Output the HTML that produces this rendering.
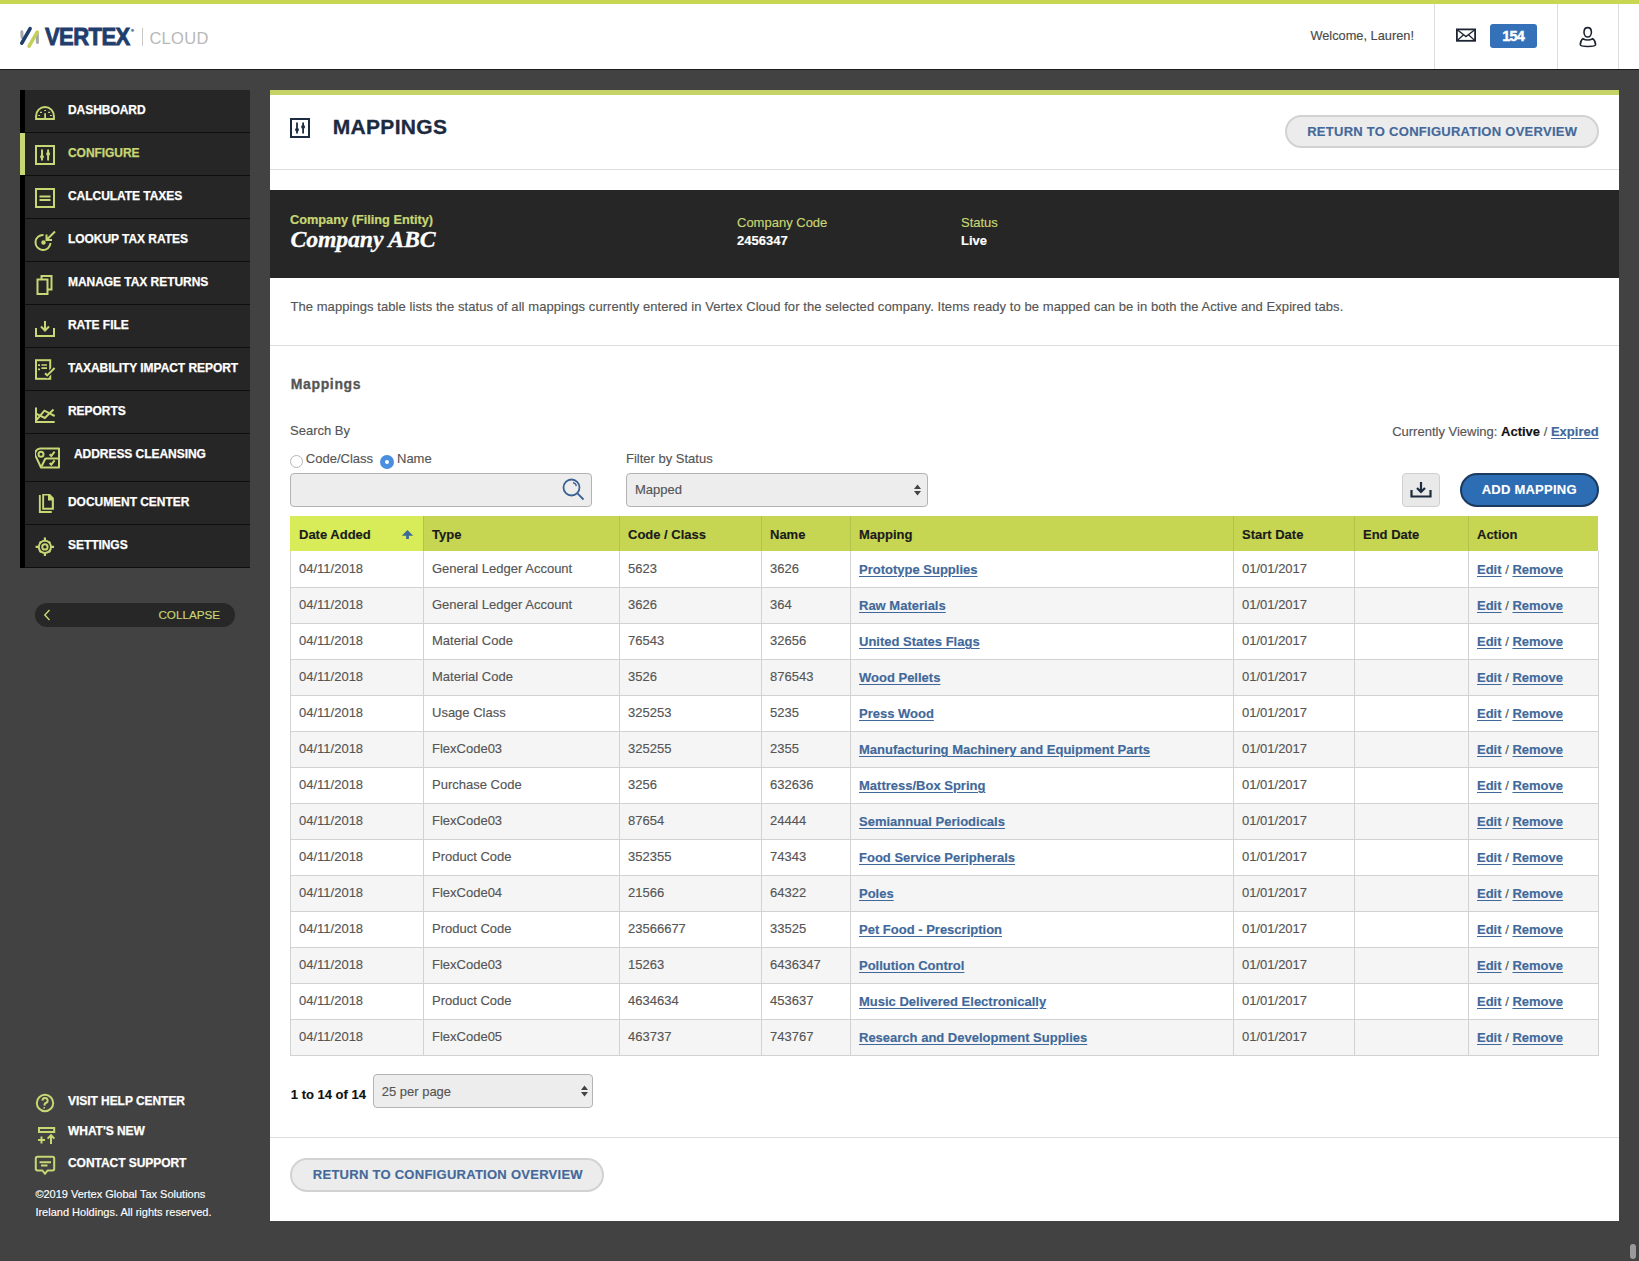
<!DOCTYPE html>
<html><head><meta charset="utf-8"><title>Vertex Cloud - Mappings</title>
<style>
*{box-sizing:border-box;margin:0;padding:0}
html,body{width:1639px;height:1261px;overflow:hidden;background:#424242;font-family:"Liberation Sans",sans-serif;position:relative}
.t{position:absolute;white-space:nowrap;-webkit-text-stroke:0.15px currentColor}
.r{position:absolute}
.b{font-weight:bold}
.nav{color:#fff;font-weight:bold;-webkit-text-stroke:0.25px currentColor;letter-spacing:-0.05px}
.lnk{color:#41689a;font-weight:bold;text-decoration:underline;text-underline-offset:2px}
.cell{color:#555}
.hd{color:#1b1b1b;font-weight:bold}
.serif{font-family:"Liberation Serif",serif;font-weight:bold;font-style:italic}
</style></head><body>

<div class="r" style="left:0px;top:0px;width:1639px;height:4px;background:#c8d752"></div>
<div class="r" style="left:0px;top:4px;width:1639px;height:65px;background:#fff"></div>
<div class="r" style="left:0px;top:69px;width:1639px;height:1px;background:#1c1c1c"></div>
<div class="r" style="left:1434px;top:4px;width:1px;height:65px;background:#dcdcdc"></div>
<div class="r" style="left:1557px;top:4px;width:1px;height:65px;background:#dcdcdc"></div>
<div class="r" style="left:1618px;top:4px;width:1px;height:65px;background:#dcdcdc"></div>
<svg class="r" style="left:18px;top:26px;" width="24" height="23" viewBox="0 0 24 23" fill="none"><line x1="3.8" y1="5.8" x2="4.1" y2="11.5" stroke="#a3a7ab" stroke-width="3" stroke-linecap="round"/><line x1="12.1" y1="2.6" x2="3.8" y2="17.2" stroke="#1f3d6d" stroke-width="3.6" stroke-linecap="round"/><line x1="19.3" y1="6.5" x2="19.4" y2="16.5" stroke="#a3a7ab" stroke-width="3" stroke-linecap="round"/><line x1="19.2" y1="6.2" x2="11.1" y2="20.2" stroke="#c3d15a" stroke-width="3.6" stroke-linecap="round"/></svg>
<div class="t b" style="left:45.00px;top:26.98px;font-size:22px;line-height:22px;color:#1f3d6d;letter-spacing:-0.55px;-webkit-text-stroke:0.8px #1f3d6d;transform:scaleY(1.1);transform-origin:0 17.6px">VERTEX</div>
<div class="t " style="left:131.00px;top:29.11px;font-size:4px;line-height:4px;color:#1f3d6d">®</div>
<div class="r" style="left:142px;top:28px;width:1px;height:18px;background:#c8c8c8"></div>
<div class="t " style="left:149.40px;top:29.83px;font-size:16.5px;line-height:16.5px;color:#b8b8b8;letter-spacing:0.3px;-webkit-text-stroke:0px">CLOUD</div>
<div class="t " style="right:225.00px;top:29.96px;font-size:12.8px;line-height:12.8px;color:#4a4a4a">Welcome, Lauren!</div>
<svg class="r" style="left:1456px;top:28px;" width="21" height="15" viewBox="0 0 21 15" fill="none"><rect x="0.9" y="1.4" width="18.2" height="11.4" stroke="#1d2533" stroke-width="1.8"/><path d="M1.2 1.8 L10 8.6 L18.8 1.8 M1.2 12.4 L7.6 6.8 M18.8 12.4 L12.4 6.8" stroke="#1d2533" stroke-width="1.3"/></svg>
<div class="r" style="left:1490px;top:24px;width:47px;height:24px;background:#3571b8;border-radius:3px"></div>
<div class="t b" style="left:1502.30px;top:29.33px;font-size:14.5px;line-height:14.5px;color:#fff;letter-spacing:-0.9px;-webkit-text-stroke:0.4px #fff">154</div>
<svg class="r" style="left:1578px;top:26px;" width="20" height="23" viewBox="0 0 20 23" fill="none"><path d="M9.7 1.6 C12 1.6 13.4 3.6 13.4 6.2 C13.4 9 11.6 11 9.7 11 C7.8 11 6 9 6 6.2 C6 3.6 7.4 1.6 9.7 1.6 Z" stroke="#1d2533" stroke-width="1.6"/><path d="M4.9 12.6 Q7 14 9.8 14 Q12.6 14 14.7 12.6 Q17.4 14.4 17.6 18.8 Q17.6 20.4 9.9 20.5 Q2.3 20.4 2.3 18.8 Q2.4 14.4 4.9 12.6 Z" stroke="#1d2533" stroke-width="1.6" stroke-linejoin="round"/></svg>
<div class="r" style="left:20px;top:90px;width:5px;height:478px;background:#000"></div>
<div class="r" style="left:25px;top:90px;width:225px;height:42px;background:#262626"></div>
<div class="r" style="left:25px;top:132px;width:225px;height:1px;background:#0e0e0e"></div>
<div class="t nav" style="left:68.00px;top:103.64px;font-size:12px;line-height:12px;color:#fff">DASHBOARD</div>
<div class="r" style="left:25px;top:133px;width:225px;height:42px;background:#262626"></div>
<div class="r" style="left:25px;top:175px;width:225px;height:1px;background:#0e0e0e"></div>
<div class="t nav" style="left:68.00px;top:146.64px;font-size:12px;line-height:12px;color:#c8d674">CONFIGURE</div>
<div class="r" style="left:25px;top:176px;width:225px;height:42px;background:#262626"></div>
<div class="r" style="left:25px;top:218px;width:225px;height:1px;background:#0e0e0e"></div>
<div class="t nav" style="left:68.00px;top:189.64px;font-size:12px;line-height:12px;color:#fff">CALCULATE TAXES</div>
<div class="r" style="left:25px;top:219px;width:225px;height:42px;background:#262626"></div>
<div class="r" style="left:25px;top:261px;width:225px;height:1px;background:#0e0e0e"></div>
<div class="t nav" style="left:68.00px;top:232.64px;font-size:12px;line-height:12px;color:#fff">LOOKUP TAX RATES</div>
<div class="r" style="left:25px;top:262px;width:225px;height:42px;background:#262626"></div>
<div class="r" style="left:25px;top:304px;width:225px;height:1px;background:#0e0e0e"></div>
<div class="t nav" style="left:68.00px;top:275.64px;font-size:12px;line-height:12px;color:#fff">MANAGE TAX RETURNS</div>
<div class="r" style="left:25px;top:305px;width:225px;height:42px;background:#262626"></div>
<div class="r" style="left:25px;top:347px;width:225px;height:1px;background:#0e0e0e"></div>
<div class="t nav" style="left:68.00px;top:318.64px;font-size:12px;line-height:12px;color:#fff">RATE FILE</div>
<div class="r" style="left:25px;top:348px;width:225px;height:42px;background:#262626"></div>
<div class="r" style="left:25px;top:390px;width:225px;height:1px;background:#0e0e0e"></div>
<div class="t nav" style="left:68.00px;top:361.64px;font-size:12px;line-height:12px;color:#fff">TAXABILITY IMPACT REPORT</div>
<div class="r" style="left:25px;top:391px;width:225px;height:42px;background:#262626"></div>
<div class="r" style="left:25px;top:433px;width:225px;height:1px;background:#0e0e0e"></div>
<div class="t nav" style="left:68.00px;top:404.64px;font-size:12px;line-height:12px;color:#fff">REPORTS</div>
<div class="r" style="left:25px;top:434px;width:225px;height:47px;background:#262626"></div>
<div class="r" style="left:25px;top:481px;width:225px;height:1px;background:#0e0e0e"></div>
<div class="t nav" style="left:74.00px;top:447.64px;font-size:12px;line-height:12px;color:#fff">ADDRESS CLEANSING</div>
<div class="r" style="left:25px;top:482px;width:225px;height:42px;background:#262626"></div>
<div class="r" style="left:25px;top:524px;width:225px;height:1px;background:#0e0e0e"></div>
<div class="t nav" style="left:68.00px;top:495.64px;font-size:12px;line-height:12px;color:#fff">DOCUMENT CENTER</div>
<div class="r" style="left:25px;top:525px;width:225px;height:42px;background:#262626"></div>
<div class="r" style="left:25px;top:567px;width:225px;height:1px;background:#0e0e0e"></div>
<div class="t nav" style="left:68.00px;top:538.64px;font-size:12px;line-height:12px;color:#fff">SETTINGS</div>
<div class="r" style="left:20px;top:133px;width:5px;height:42px;background:#c8d674"></div>
<svg class="r" style="left:35px;top:105px;" width="20" height="16" viewBox="0 0 20 16" fill="none"><path d="M1.1 14 V10.9 A8.9 8.9 0 0 1 18.9 10.9 V14 Z" stroke="#c8d674" stroke-width="2"/><path d="M9.2 4.9 h1.8 v1.2 h-1.8 Z M5 6.8 h2 v1.2 h-2 Z M13.1 6.8 h2 v1.2 h-2 Z M3.2 9.9 h1.9 v1.2 h-1.9 Z M15 9.9 h1.9 v1.2 h-1.9 Z M9.2 8.2 h1.8 v5.8 h-1.8 Z" fill="#c8d674"/></svg>
<svg class="r" style="left:35px;top:145px;" width="20" height="20" viewBox="0 0 20 20" fill="none"><rect x="1" y="1" width="18" height="18" stroke="#c8d674" stroke-width="2"/><path d="M7 5.2 V14.8 M13.1 5.2 V14.8" stroke="#c8d674" stroke-width="2" stroke-width="1.8" stroke-linecap="round"/><ellipse cx="7" cy="11.8" rx="2" ry="1.8" fill="#c8d674"/><ellipse cx="13.1" cy="8.9" rx="2" ry="1.8" fill="#c8d674"/></svg>
<svg class="r" style="left:35px;top:188px;" width="20" height="20" viewBox="0 0 20 20" fill="none"><rect x="1" y="1" width="18" height="18" stroke="#c8d674" stroke-width="2"/><path d="M4.5 8.5 H15.5 M4.5 12 H15.5" stroke="#c8d674" stroke-width="2"/></svg>
<svg class="r" style="left:34px;top:230px;" width="23" height="23" viewBox="0 0 23 23" fill="none"><path d="M16.5 13 A7.5 7.5 0 1 1 9.5 5" stroke="#c8d674" stroke-width="2" stroke-width="2.2"/><circle cx="9.5" cy="12.5" r="2.2" fill="#c8d674"/><path d="M21 1.5 L13 9.5 M12.5 4.5 V10 H18" stroke="#c8d674" stroke-width="2" stroke-width="2"/></svg>
<svg class="r" style="left:36px;top:275px;" width="18" height="21" viewBox="0 0 18 21" fill="none"><path d="M5.5 4.5 V1 H15.5 V14.5 H11.5" stroke="#c8d674" stroke-width="2"/><rect x="1.5" y="4.5" width="10" height="14.5" stroke="#c8d674" stroke-width="2"/></svg>
<svg class="r" style="left:35px;top:320px;" width="20" height="18" viewBox="0 0 20 18" fill="none"><path d="M1 8 V16 H19 V8" stroke="#c8d674" stroke-width="2"/><path d="M10 1 V10 M6 6.5 L10 10.5 L14 6.5" stroke="#c8d674" stroke-width="2"/></svg>
<svg class="r" style="left:35px;top:359px;" width="22" height="22" viewBox="0 0 22 22" fill="none"><rect x="1" y="1.2" width="14.2" height="18.6" stroke="#c8d674" stroke-width="2"/><path d="M3 5.2 h2 v1.8 h-2 Z M3 9.4 h2 v1.8 h-2 Z M6.4 5.2 h5.6 v1.6 h-5.6 Z M6.4 8.3 h5.6 v1.6 h-5.6 Z" fill="#c8d674"/><path d="M10 14.2 L12.2 16.4 L19.6 9" stroke="#262626" stroke-width="4.5"/><path d="M10 14.2 L12.2 16.4 L19.6 9" stroke="#c8d674" stroke-width="2"/></svg>
<svg class="r" style="left:35px;top:406px;" width="21" height="18" viewBox="0 0 21 18" fill="none"><path d="M1 1.4 V16 H19.7" stroke="#c8d674" stroke-width="2"/><path d="M1.5 14 L9.4 4.7 L19.7 10 M1.5 7.8 L9.8 12 L18.5 3.5" stroke="#c8d674" stroke-width="2" stroke-width="1.8"/></svg>
<svg class="r" style="left:35px;top:447px;" width="26" height="22" viewBox="0 0 26 22" fill="none"><path d="M6 20.5 L1.3 10.3 A5.4 5.4 0 0 1 5 1.5 H24 V20.5 Z" stroke="#c8d674" stroke-width="2" stroke-linejoin="round"/><path d="M10.5 11.2 L6.5 19.5 M10.3 11.5 H24" stroke="#c8d674" stroke-width="2" stroke-width="1.5"/><circle cx="6" cy="7.2" r="2.5" stroke="#c8d674" stroke-width="2" stroke-width="1.8"/><path d="M14.6 7.2 l1.7 1.7 l3.3 -4.3 M14.6 16 l1.7 1.7 l3.3 -4.3" stroke="#c8d674" stroke-width="2" stroke-width="1.3"/></svg>
<svg class="r" style="left:37px;top:492px;" width="18" height="22" viewBox="0 0 18 22" fill="none"><path d="M1.9 3.1 H3.8 V19 H14.8 V21 H1.9 Z" fill="#c8d674"/><path fill-rule="evenodd" d="M5.2 2 H13 L16.9 6 V17.7 H5.2 Z M7.1 3.5 H11 V8.4 H14.8 V15.8 H7.1 Z" fill="#c8d674"/></svg>
<svg class="r" style="left:35px;top:537px;" width="19" height="19" viewBox="0 0 19 19" fill="none"><circle cx="9.9" cy="9.9" r="6.1" stroke="#c8d674" stroke-width="2" stroke-width="1.8"/><circle cx="9.9" cy="9.9" r="2.7" stroke="#c8d674" stroke-width="2" stroke-width="1.5"/><path d="M8.8 0.6 h2.2 v3 h-2.2 Z M8.8 16.2 h2.2 v3 h-2.2 Z M0.6 8.8 v2.2 h3 v-2.2 Z M16.2 8.8 v2.2 h3 v-2.2 Z" fill="#c8d674"/><path d="M4.6 4.6 l1.2 1.2 M15.2 4.6 l-1.2 1.2 M4.6 15.2 l1.2 -1.2 M15.2 15.2 l-1.2 -1.2" stroke="#c8d674" stroke-width="2" stroke-width="2.4"/></svg>
<div class="r" style="left:35px;top:603px;width:200px;height:24px;background:#272727;border-radius:12px"></div>
<svg class="r" style="left:43px;top:609px;" width="8" height="12" viewBox="0 0 8 12" fill="none"><path d="M6.5 1 L1.8 6 L6.5 11" stroke="#c8d674" stroke-width="1.4"/></svg>
<div class="t " style="left:158.40px;top:609.40px;font-size:11.7px;line-height:11.7px;color:#c8d674">COLLAPSE</div>
<svg class="r" style="left:35px;top:1093px;" width="20" height="20" viewBox="0 0 20 20" fill="none"><circle cx="10" cy="10" r="8.2" stroke="#c8d674" stroke-width="2" stroke-width="1.6"/><path d="M7.6 7.6 A2.5 2.5 0 1 1 10.6 9.9 Q9.6 10.6 9.4 12.6" stroke="#c8d674" stroke-width="2" stroke-width="1.5"/><circle cx="9.2" cy="14.8" r="0.9" fill="#c8d674"/></svg>
<div class="t nav" style="left:68.00px;top:1094.64px;font-size:12px;line-height:12px;">VISIT HELP CENTER</div>
<svg class="r" style="left:37px;top:1126px;" width="19" height="19" viewBox="0 0 19 19" fill="none"><rect x="2" y="2" width="15.2" height="4" stroke="#c8d674" stroke-width="2"/><path d="M1 14 h7 M4.5 10.5 v7 M14 18 V9.5 M10.6 12.6 L14 9.2 L17.4 12.6" stroke="#c8d674" stroke-width="2" stroke-width="2"/></svg>
<div class="t nav" style="left:68.00px;top:1125.44px;font-size:12px;line-height:12px;">WHAT'S NEW</div>
<svg class="r" style="left:34px;top:1155px;" width="22" height="22" viewBox="0 0 22 22" fill="none"><path d="M3.5 1.8 H18.5 Q20.2 1.8 20.2 3.5 V13.8 Q20.2 15.5 18.5 15.5 H13.5 L11 18.8 L8.5 15.5 H3.5 Q1.8 15.5 1.8 13.8 V3.5 Q1.8 1.8 3.5 1.8 Z" stroke="#c8d674" stroke-width="2" stroke-width="1.8" stroke-linejoin="round"/><path d="M5.5 7.3 H17 M7 10.6 H13.5" stroke="#c8d674" stroke-width="2" stroke-width="1.5"/></svg>
<div class="t nav" style="left:68.00px;top:1156.54px;font-size:12px;line-height:12px;">CONTACT SUPPORT</div>
<div class="t " style="left:35.40px;top:1189.29px;font-size:11px;line-height:11px;color:#fff">©2019 Vertex Global Tax Solutions</div>
<div class="t " style="left:35.40px;top:1206.99px;font-size:11px;line-height:11px;color:#fff">Ireland Holdings. All rights reserved.</div>
<div class="r" style="left:270px;top:90px;width:1349px;height:1131px;background:#fff"></div>
<div class="r" style="left:270px;top:90px;width:1349px;height:5px;background:#c5d366"></div>
<svg class="r" style="left:290px;top:118px;" width="20" height="20" viewBox="0 0 20 20" fill="none"><rect x="1" y="1" width="18" height="18" stroke="#1d2b3e" stroke-width="2"/><path d="M7 5.2 V14.8 M13.1 5.2 V14.8" stroke="#1d2b3e" stroke-width="1.8" stroke-linecap="round"/><ellipse cx="7" cy="11.8" rx="2" ry="1.8" fill="#1d2b3e"/><ellipse cx="13.1" cy="8.9" rx="2" ry="1.8" fill="#1d2b3e"/></svg>
<div class="t b" style="left:332.80px;top:116.22px;font-size:21px;line-height:21px;color:#1c2a3f;letter-spacing:0.3px;-webkit-text-stroke:0.3px #1c2a3f">MAPPINGS</div>
<div class="r" style="left:1285px;top:115px;width:314px;height:33px;background:#ececec;border:2px solid #d2d2d2;border-radius:17px"></div>
<div class="t b" style="left:1307.20px;top:125.20px;font-size:13px;line-height:13px;color:#44689a;letter-spacing:0.27px">RETURN TO CONFIGURATION OVERVIEW</div>
<div class="r" style="left:270px;top:169px;width:1349px;height:1px;background:#dedede"></div>
<div class="r" style="left:270px;top:190px;width:1349px;height:88px;background:#262626"></div>
<div class="t b" style="left:290.00px;top:213.91px;font-size:12.75px;line-height:12.75px;color:#c8d674;-webkit-text-stroke:0.2px #c8d674">Company (Filing Entity)</div>
<div class="t serif" style="left:290.50px;top:228.15px;font-size:23.8px;line-height:23.8px;color:#fff;letter-spacing:-0.15px;-webkit-text-stroke:0.3px #fff">Company ABC</div>
<div class="t " style="left:737.00px;top:215.50px;font-size:13px;line-height:13px;color:#c8d674">Company Code</div>
<div class="t b" style="left:737.00px;top:234.30px;font-size:13px;line-height:13px;color:#fff">2456347</div>
<div class="t " style="left:961.00px;top:215.50px;font-size:13px;line-height:13px;color:#c8d674">Status</div>
<div class="t b" style="left:961.00px;top:234.30px;font-size:13px;line-height:13px;color:#fff">Live</div>
<div class="t " style="left:290.40px;top:300.00px;font-size:13px;line-height:13px;color:#555;letter-spacing:0.07px">The mappings table lists the status of all mappings currently entered in Vertex Cloud for the selected company. Items ready to be mapped can be in both the Active and Expired tabs.</div>
<div class="r" style="left:270px;top:345px;width:1349px;height:1px;background:#dedede"></div>
<div class="t b" style="left:290.70px;top:376.95px;font-size:14px;line-height:14px;color:#555;letter-spacing:0.65px;-webkit-text-stroke:0.3px #555">Mappings</div>
<div class="t " style="left:290.00px;top:423.80px;font-size:13px;line-height:13px;color:#555">Search By</div>
<div class="t " style="right:40.40px;top:424.70px;font-size:13px;line-height:13px;color:#555">Currently Viewing: <span style="color:#111;font-weight:bold">Active</span> / <span class="lnk">Expired</span></div>
<div class="r" style="left:290px;top:455px;width:13px;height:13px;border:1px solid #b5b5b5;border-radius:50%;background:#fff"></div>
<div class="t " style="left:305.80px;top:451.80px;font-size:13px;line-height:13px;color:#555">Code/Class</div>
<div class="r" style="left:380px;top:455px;width:14px;height:14px;background:#4a8ee0;border-radius:50%"></div>
<div class="r" style="left:385px;top:460px;width:4px;height:4px;background:#fff;border-radius:50%"></div>
<div class="t " style="left:397.00px;top:451.80px;font-size:13px;line-height:13px;color:#555">Name</div>
<div class="t " style="left:626.00px;top:452.00px;font-size:13px;line-height:13px;color:#555">Filter by Status</div>
<div class="r" style="left:290px;top:473px;width:302px;height:34px;background:#ededed;border:1px solid #b3b3b3;border-radius:4px"></div>
<svg class="r" style="left:562px;top:478px;" width="24" height="23" viewBox="0 0 24 23" fill="none"><circle cx="9.5" cy="9.5" r="8" stroke="#3a6194" stroke-width="1.8"/><path d="M15.2 15.2 L21.5 21.5" stroke="#3a6194" stroke-width="1.8"/><path d="M11 4.5 A5 5 0 0 1 14.5 8" stroke="#3a6194" stroke-width="1.4"/></svg>
<div class="r" style="left:626px;top:473px;width:302px;height:34px;background:#ededed;border:1px solid #b3b3b3;border-radius:4px"></div>
<div class="t " style="left:635.00px;top:483.00px;font-size:13px;line-height:13px;color:#555">Mapped</div>
<svg class="r" style="left:913px;top:483px;" width="9" height="14" viewBox="0 0 9 14" fill="none"><path d="M1 6 L4.5 1.5 L8 6 Z M1 8 L4.5 12.5 L8 8 Z" fill="#444"/></svg>
<div class="r" style="left:1402px;top:473px;width:38px;height:34px;background:#e9e9e9;border:1px solid #d0d0d0;border-radius:4px"></div>
<svg class="r" style="left:1410px;top:481px;" width="22" height="18" viewBox="0 0 22 18" fill="none"><path d="M1.5 9 V15.5 H20.5 V9" stroke="#1d2b3e" stroke-width="2.2"/><path d="M11 1 V11 M7 7 L11 11 L15 7" stroke="#1d2b3e" stroke-width="2.2"/></svg>
<div class="r" style="left:1460px;top:473px;width:139px;height:34px;background:#2c6db3;border:2px solid #1c3a5e;border-radius:17px"></div>
<div class="t b" style="left:1481.70px;top:483.20px;font-size:13px;line-height:13px;color:#fff;letter-spacing:0.24px">ADD MAPPING</div>
<div class="r" style="left:290px;top:516px;width:1308px;height:35px;background:#c6d653"></div>
<div class="r" style="left:290px;top:516px;width:133px;height:35px;background:#d7ec58"></div>
<div class="r" style="left:423px;top:516px;width:1px;height:35px;background:#b3c24a"></div>
<div class="r" style="left:619px;top:516px;width:1px;height:35px;background:#b3c24a"></div>
<div class="r" style="left:761px;top:516px;width:1px;height:35px;background:#b3c24a"></div>
<div class="r" style="left:850px;top:516px;width:1px;height:35px;background:#b3c24a"></div>
<div class="r" style="left:1233px;top:516px;width:1px;height:35px;background:#b3c24a"></div>
<div class="r" style="left:1354px;top:516px;width:1px;height:35px;background:#b3c24a"></div>
<div class="r" style="left:1468px;top:516px;width:1px;height:35px;background:#b3c24a"></div>
<div class="t hd" style="left:299.00px;top:527.60px;font-size:13px;line-height:13px;">Date Added</div>
<div class="t hd" style="left:432.00px;top:527.60px;font-size:13px;line-height:13px;">Type</div>
<div class="t hd" style="left:628.00px;top:527.60px;font-size:13px;line-height:13px;">Code / Class</div>
<div class="t hd" style="left:770.00px;top:527.60px;font-size:13px;line-height:13px;">Name</div>
<div class="t hd" style="left:859.00px;top:527.60px;font-size:13px;line-height:13px;">Mapping</div>
<div class="t hd" style="left:1242.00px;top:527.60px;font-size:13px;line-height:13px;">Start Date</div>
<div class="t hd" style="left:1363.00px;top:527.60px;font-size:13px;line-height:13px;">End Date</div>
<div class="t hd" style="left:1477.00px;top:527.60px;font-size:13px;line-height:13px;">Action</div>
<svg class="r" style="left:401px;top:529px;" width="13" height="11" viewBox="0 0 13 11" fill="none"><path d="M6.5 1 L12.2 6.8 H7.9 V10 H5.1 V6.8 H0.8 Z" fill="#3f6a94"/></svg>
<div class="r" style="left:290px;top:551px;width:1308px;height:36px;background:#fff"></div>
<div class="t cell" style="left:299.00px;top:561.75px;font-size:13px;line-height:13px;">04/11/2018</div>
<div class="t cell" style="left:432.00px;top:561.75px;font-size:13px;line-height:13px;">General Ledger Account</div>
<div class="t cell" style="left:628.00px;top:561.75px;font-size:13px;line-height:13px;">5623</div>
<div class="t cell" style="left:770.00px;top:561.75px;font-size:13px;line-height:13px;">3626</div>
<div class="t lnk" style="left:859.00px;top:562.95px;font-size:13px;line-height:13px;">Prototype Supplies</div>
<div class="t cell" style="left:1242.00px;top:561.75px;font-size:13px;line-height:13px;">01/01/2017</div>
<div class="t " style="left:1477.00px;top:562.95px;font-size:13px;line-height:13px;"><span class="lnk">Edit</span> <span style="color:#555;font-weight:normal">/</span> <span class="lnk">Remove</span></div>
<div class="r" style="left:290px;top:587px;width:1308px;height:36px;background:#f5f5f5"></div>
<div class="t cell" style="left:299.00px;top:597.75px;font-size:13px;line-height:13px;">04/11/2018</div>
<div class="t cell" style="left:432.00px;top:597.75px;font-size:13px;line-height:13px;">General Ledger Account</div>
<div class="t cell" style="left:628.00px;top:597.75px;font-size:13px;line-height:13px;">3626</div>
<div class="t cell" style="left:770.00px;top:597.75px;font-size:13px;line-height:13px;">364</div>
<div class="t lnk" style="left:859.00px;top:598.95px;font-size:13px;line-height:13px;">Raw Materials</div>
<div class="t cell" style="left:1242.00px;top:597.75px;font-size:13px;line-height:13px;">01/01/2017</div>
<div class="t " style="left:1477.00px;top:598.95px;font-size:13px;line-height:13px;"><span class="lnk">Edit</span> <span style="color:#555;font-weight:normal">/</span> <span class="lnk">Remove</span></div>
<div class="r" style="left:290px;top:623px;width:1308px;height:36px;background:#fff"></div>
<div class="t cell" style="left:299.00px;top:633.75px;font-size:13px;line-height:13px;">04/11/2018</div>
<div class="t cell" style="left:432.00px;top:633.75px;font-size:13px;line-height:13px;">Material Code</div>
<div class="t cell" style="left:628.00px;top:633.75px;font-size:13px;line-height:13px;">76543</div>
<div class="t cell" style="left:770.00px;top:633.75px;font-size:13px;line-height:13px;">32656</div>
<div class="t lnk" style="left:859.00px;top:634.95px;font-size:13px;line-height:13px;">United States Flags</div>
<div class="t cell" style="left:1242.00px;top:633.75px;font-size:13px;line-height:13px;">01/01/2017</div>
<div class="t " style="left:1477.00px;top:634.95px;font-size:13px;line-height:13px;"><span class="lnk">Edit</span> <span style="color:#555;font-weight:normal">/</span> <span class="lnk">Remove</span></div>
<div class="r" style="left:290px;top:659px;width:1308px;height:36px;background:#f5f5f5"></div>
<div class="t cell" style="left:299.00px;top:669.75px;font-size:13px;line-height:13px;">04/11/2018</div>
<div class="t cell" style="left:432.00px;top:669.75px;font-size:13px;line-height:13px;">Material Code</div>
<div class="t cell" style="left:628.00px;top:669.75px;font-size:13px;line-height:13px;">3526</div>
<div class="t cell" style="left:770.00px;top:669.75px;font-size:13px;line-height:13px;">876543</div>
<div class="t lnk" style="left:859.00px;top:670.95px;font-size:13px;line-height:13px;">Wood Pellets</div>
<div class="t cell" style="left:1242.00px;top:669.75px;font-size:13px;line-height:13px;">01/01/2017</div>
<div class="t " style="left:1477.00px;top:670.95px;font-size:13px;line-height:13px;"><span class="lnk">Edit</span> <span style="color:#555;font-weight:normal">/</span> <span class="lnk">Remove</span></div>
<div class="r" style="left:290px;top:695px;width:1308px;height:36px;background:#fff"></div>
<div class="t cell" style="left:299.00px;top:705.75px;font-size:13px;line-height:13px;">04/11/2018</div>
<div class="t cell" style="left:432.00px;top:705.75px;font-size:13px;line-height:13px;">Usage Class</div>
<div class="t cell" style="left:628.00px;top:705.75px;font-size:13px;line-height:13px;">325253</div>
<div class="t cell" style="left:770.00px;top:705.75px;font-size:13px;line-height:13px;">5235</div>
<div class="t lnk" style="left:859.00px;top:706.95px;font-size:13px;line-height:13px;">Press Wood</div>
<div class="t cell" style="left:1242.00px;top:705.75px;font-size:13px;line-height:13px;">01/01/2017</div>
<div class="t " style="left:1477.00px;top:706.95px;font-size:13px;line-height:13px;"><span class="lnk">Edit</span> <span style="color:#555;font-weight:normal">/</span> <span class="lnk">Remove</span></div>
<div class="r" style="left:290px;top:731px;width:1308px;height:36px;background:#f5f5f5"></div>
<div class="t cell" style="left:299.00px;top:741.75px;font-size:13px;line-height:13px;">04/11/2018</div>
<div class="t cell" style="left:432.00px;top:741.75px;font-size:13px;line-height:13px;">FlexCode03</div>
<div class="t cell" style="left:628.00px;top:741.75px;font-size:13px;line-height:13px;">325255</div>
<div class="t cell" style="left:770.00px;top:741.75px;font-size:13px;line-height:13px;">2355</div>
<div class="t lnk" style="left:859.00px;top:742.95px;font-size:13px;line-height:13px;">Manufacturing Machinery and Equipment Parts</div>
<div class="t cell" style="left:1242.00px;top:741.75px;font-size:13px;line-height:13px;">01/01/2017</div>
<div class="t " style="left:1477.00px;top:742.95px;font-size:13px;line-height:13px;"><span class="lnk">Edit</span> <span style="color:#555;font-weight:normal">/</span> <span class="lnk">Remove</span></div>
<div class="r" style="left:290px;top:767px;width:1308px;height:36px;background:#fff"></div>
<div class="t cell" style="left:299.00px;top:777.75px;font-size:13px;line-height:13px;">04/11/2018</div>
<div class="t cell" style="left:432.00px;top:777.75px;font-size:13px;line-height:13px;">Purchase Code</div>
<div class="t cell" style="left:628.00px;top:777.75px;font-size:13px;line-height:13px;">3256</div>
<div class="t cell" style="left:770.00px;top:777.75px;font-size:13px;line-height:13px;">632636</div>
<div class="t lnk" style="left:859.00px;top:778.95px;font-size:13px;line-height:13px;">Mattress/Box Spring</div>
<div class="t cell" style="left:1242.00px;top:777.75px;font-size:13px;line-height:13px;">01/01/2017</div>
<div class="t " style="left:1477.00px;top:778.95px;font-size:13px;line-height:13px;"><span class="lnk">Edit</span> <span style="color:#555;font-weight:normal">/</span> <span class="lnk">Remove</span></div>
<div class="r" style="left:290px;top:803px;width:1308px;height:36px;background:#f5f5f5"></div>
<div class="t cell" style="left:299.00px;top:813.75px;font-size:13px;line-height:13px;">04/11/2018</div>
<div class="t cell" style="left:432.00px;top:813.75px;font-size:13px;line-height:13px;">FlexCode03</div>
<div class="t cell" style="left:628.00px;top:813.75px;font-size:13px;line-height:13px;">87654</div>
<div class="t cell" style="left:770.00px;top:813.75px;font-size:13px;line-height:13px;">24444</div>
<div class="t lnk" style="left:859.00px;top:814.95px;font-size:13px;line-height:13px;">Semiannual Periodicals</div>
<div class="t cell" style="left:1242.00px;top:813.75px;font-size:13px;line-height:13px;">01/01/2017</div>
<div class="t " style="left:1477.00px;top:814.95px;font-size:13px;line-height:13px;"><span class="lnk">Edit</span> <span style="color:#555;font-weight:normal">/</span> <span class="lnk">Remove</span></div>
<div class="r" style="left:290px;top:839px;width:1308px;height:36px;background:#fff"></div>
<div class="t cell" style="left:299.00px;top:849.75px;font-size:13px;line-height:13px;">04/11/2018</div>
<div class="t cell" style="left:432.00px;top:849.75px;font-size:13px;line-height:13px;">Product Code</div>
<div class="t cell" style="left:628.00px;top:849.75px;font-size:13px;line-height:13px;">352355</div>
<div class="t cell" style="left:770.00px;top:849.75px;font-size:13px;line-height:13px;">74343</div>
<div class="t lnk" style="left:859.00px;top:850.95px;font-size:13px;line-height:13px;">Food Service Peripherals</div>
<div class="t cell" style="left:1242.00px;top:849.75px;font-size:13px;line-height:13px;">01/01/2017</div>
<div class="t " style="left:1477.00px;top:850.95px;font-size:13px;line-height:13px;"><span class="lnk">Edit</span> <span style="color:#555;font-weight:normal">/</span> <span class="lnk">Remove</span></div>
<div class="r" style="left:290px;top:875px;width:1308px;height:36px;background:#f5f5f5"></div>
<div class="t cell" style="left:299.00px;top:885.75px;font-size:13px;line-height:13px;">04/11/2018</div>
<div class="t cell" style="left:432.00px;top:885.75px;font-size:13px;line-height:13px;">FlexCode04</div>
<div class="t cell" style="left:628.00px;top:885.75px;font-size:13px;line-height:13px;">21566</div>
<div class="t cell" style="left:770.00px;top:885.75px;font-size:13px;line-height:13px;">64322</div>
<div class="t lnk" style="left:859.00px;top:886.95px;font-size:13px;line-height:13px;">Poles</div>
<div class="t cell" style="left:1242.00px;top:885.75px;font-size:13px;line-height:13px;">01/01/2017</div>
<div class="t " style="left:1477.00px;top:886.95px;font-size:13px;line-height:13px;"><span class="lnk">Edit</span> <span style="color:#555;font-weight:normal">/</span> <span class="lnk">Remove</span></div>
<div class="r" style="left:290px;top:911px;width:1308px;height:36px;background:#fff"></div>
<div class="t cell" style="left:299.00px;top:921.75px;font-size:13px;line-height:13px;">04/11/2018</div>
<div class="t cell" style="left:432.00px;top:921.75px;font-size:13px;line-height:13px;">Product Code</div>
<div class="t cell" style="left:628.00px;top:921.75px;font-size:13px;line-height:13px;">23566677</div>
<div class="t cell" style="left:770.00px;top:921.75px;font-size:13px;line-height:13px;">33525</div>
<div class="t lnk" style="left:859.00px;top:922.95px;font-size:13px;line-height:13px;">Pet Food - Prescription</div>
<div class="t cell" style="left:1242.00px;top:921.75px;font-size:13px;line-height:13px;">01/01/2017</div>
<div class="t " style="left:1477.00px;top:922.95px;font-size:13px;line-height:13px;"><span class="lnk">Edit</span> <span style="color:#555;font-weight:normal">/</span> <span class="lnk">Remove</span></div>
<div class="r" style="left:290px;top:947px;width:1308px;height:36px;background:#f5f5f5"></div>
<div class="t cell" style="left:299.00px;top:957.75px;font-size:13px;line-height:13px;">04/11/2018</div>
<div class="t cell" style="left:432.00px;top:957.75px;font-size:13px;line-height:13px;">FlexCode03</div>
<div class="t cell" style="left:628.00px;top:957.75px;font-size:13px;line-height:13px;">15263</div>
<div class="t cell" style="left:770.00px;top:957.75px;font-size:13px;line-height:13px;">6436347</div>
<div class="t lnk" style="left:859.00px;top:958.95px;font-size:13px;line-height:13px;">Pollution Control</div>
<div class="t cell" style="left:1242.00px;top:957.75px;font-size:13px;line-height:13px;">01/01/2017</div>
<div class="t " style="left:1477.00px;top:958.95px;font-size:13px;line-height:13px;"><span class="lnk">Edit</span> <span style="color:#555;font-weight:normal">/</span> <span class="lnk">Remove</span></div>
<div class="r" style="left:290px;top:983px;width:1308px;height:36px;background:#fff"></div>
<div class="t cell" style="left:299.00px;top:993.75px;font-size:13px;line-height:13px;">04/11/2018</div>
<div class="t cell" style="left:432.00px;top:993.75px;font-size:13px;line-height:13px;">Product Code</div>
<div class="t cell" style="left:628.00px;top:993.75px;font-size:13px;line-height:13px;">4634634</div>
<div class="t cell" style="left:770.00px;top:993.75px;font-size:13px;line-height:13px;">453637</div>
<div class="t lnk" style="left:859.00px;top:994.95px;font-size:13px;line-height:13px;">Music Delivered Electronically</div>
<div class="t cell" style="left:1242.00px;top:993.75px;font-size:13px;line-height:13px;">01/01/2017</div>
<div class="t " style="left:1477.00px;top:994.95px;font-size:13px;line-height:13px;"><span class="lnk">Edit</span> <span style="color:#555;font-weight:normal">/</span> <span class="lnk">Remove</span></div>
<div class="r" style="left:290px;top:1019px;width:1308px;height:36px;background:#f5f5f5"></div>
<div class="t cell" style="left:299.00px;top:1029.75px;font-size:13px;line-height:13px;">04/11/2018</div>
<div class="t cell" style="left:432.00px;top:1029.75px;font-size:13px;line-height:13px;">FlexCode05</div>
<div class="t cell" style="left:628.00px;top:1029.75px;font-size:13px;line-height:13px;">463737</div>
<div class="t cell" style="left:770.00px;top:1029.75px;font-size:13px;line-height:13px;">743767</div>
<div class="t lnk" style="left:859.00px;top:1030.95px;font-size:13px;line-height:13px;">Research and Development Supplies</div>
<div class="t cell" style="left:1242.00px;top:1029.75px;font-size:13px;line-height:13px;">01/01/2017</div>
<div class="t " style="left:1477.00px;top:1030.95px;font-size:13px;line-height:13px;"><span class="lnk">Edit</span> <span style="color:#555;font-weight:normal">/</span> <span class="lnk">Remove</span></div>
<div class="r" style="left:290px;top:587px;width:1308px;height:1px;background:#d2d2d2"></div>
<div class="r" style="left:290px;top:623px;width:1308px;height:1px;background:#d2d2d2"></div>
<div class="r" style="left:290px;top:659px;width:1308px;height:1px;background:#d2d2d2"></div>
<div class="r" style="left:290px;top:695px;width:1308px;height:1px;background:#d2d2d2"></div>
<div class="r" style="left:290px;top:731px;width:1308px;height:1px;background:#d2d2d2"></div>
<div class="r" style="left:290px;top:767px;width:1308px;height:1px;background:#d2d2d2"></div>
<div class="r" style="left:290px;top:803px;width:1308px;height:1px;background:#d2d2d2"></div>
<div class="r" style="left:290px;top:839px;width:1308px;height:1px;background:#d2d2d2"></div>
<div class="r" style="left:290px;top:875px;width:1308px;height:1px;background:#d2d2d2"></div>
<div class="r" style="left:290px;top:911px;width:1308px;height:1px;background:#d2d2d2"></div>
<div class="r" style="left:290px;top:947px;width:1308px;height:1px;background:#d2d2d2"></div>
<div class="r" style="left:290px;top:983px;width:1308px;height:1px;background:#d2d2d2"></div>
<div class="r" style="left:290px;top:1019px;width:1308px;height:1px;background:#d2d2d2"></div>
<div class="r" style="left:290px;top:1055px;width:1308px;height:1px;background:#d2d2d2"></div>
<div class="r" style="left:290px;top:551px;width:1px;height:505px;background:#d2d2d2"></div>
<div class="r" style="left:423px;top:551px;width:1px;height:505px;background:#d2d2d2"></div>
<div class="r" style="left:619px;top:551px;width:1px;height:505px;background:#d2d2d2"></div>
<div class="r" style="left:761px;top:551px;width:1px;height:505px;background:#d2d2d2"></div>
<div class="r" style="left:850px;top:551px;width:1px;height:505px;background:#d2d2d2"></div>
<div class="r" style="left:1233px;top:551px;width:1px;height:505px;background:#d2d2d2"></div>
<div class="r" style="left:1354px;top:551px;width:1px;height:505px;background:#d2d2d2"></div>
<div class="r" style="left:1468px;top:551px;width:1px;height:505px;background:#d2d2d2"></div>
<div class="r" style="left:1598px;top:551px;width:1px;height:505px;background:#d2d2d2"></div>
<div class="t b" style="left:290.80px;top:1088.00px;font-size:13px;line-height:13px;color:#111">1 to 14 of 14</div>
<div class="r" style="left:373px;top:1074px;width:220px;height:34px;background:#ededed;border:1px solid #b3b3b3;border-radius:4px"></div>
<div class="t " style="left:381.70px;top:1084.70px;font-size:13px;line-height:13px;color:#555">25 per page</div>
<svg class="r" style="left:580px;top:1084px;" width="9" height="14" viewBox="0 0 9 14" fill="none"><path d="M1 6 L4.5 1.5 L8 6 Z M1 8 L4.5 12.5 L8 8 Z" fill="#444"/></svg>
<div class="r" style="left:270px;top:1137px;width:1349px;height:1px;background:#dedede"></div>
<div class="r" style="left:290px;top:1158px;width:314px;height:34px;background:#ececec;border:2px solid #d2d2d2;border-radius:17px"></div>
<div class="t b" style="left:312.80px;top:1168.30px;font-size:13px;line-height:13px;color:#44689a;letter-spacing:0.27px">RETURN TO CONFIGURATION OVERVIEW</div>
<div class="r" style="left:1630px;top:1244px;width:6px;height:15px;background:#9a9a9a;border-radius:3px"></div>
</body></html>
